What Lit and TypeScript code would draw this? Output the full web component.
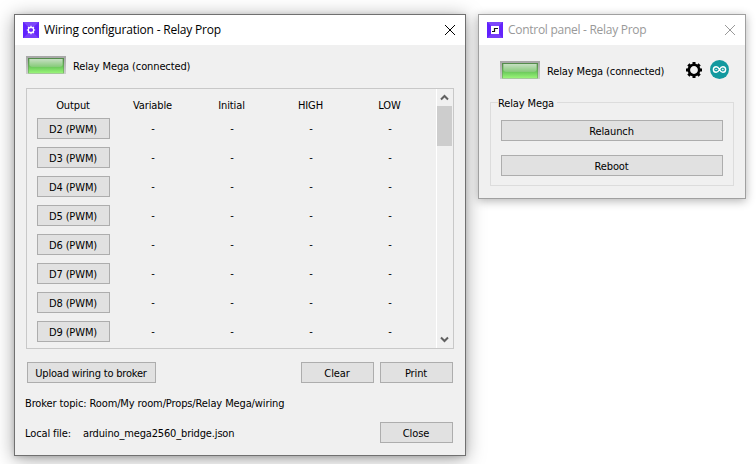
import { LitElement, html, css, svg } from "lit";
import { customElement, property } from "lit/decorators.js";

@customElement("status-led")
class StatusLed extends LitElement {
  static styles = css`
    :host { display: block; width: 40px; height: 18px; flex: none; }
    svg { display: block; }
  `;
  render() {
    return html`<svg width="40" height="18" viewBox="0 0 40 18">
      <defs>
        <linearGradient id="frame" x1="0" y1="0" x2="0" y2="1">
          <stop offset="0" stop-color="#a6a6a6" /><stop offset="1" stop-color="#cfcfcf" />
        </linearGradient>
        <linearGradient id="edge" x1="0" y1="0" x2="0" y2="1">
          <stop offset="0" stop-color="#528a4a" /><stop offset="1" stop-color="#7cc268" />
        </linearGradient>
        <linearGradient id="body" x1="0" y1="0" x2="0" y2="1">
          <stop offset="0" stop-color="#78b06e" /><stop offset=".55" stop-color="#6ac85a" /><stop offset="1" stop-color="#98f478" />
        </linearGradient>
        <linearGradient id="gloss" x1="0" y1="0" x2="0" y2="1">
          <stop offset="0" stop-color="#c6dfc2" /><stop offset="1" stop-color="#86ca79" />
        </linearGradient>
      </defs>
      <rect width="40" height="18" fill="url(#frame)" />
      <rect x="2" y="2" width="36" height="15.500" fill="url(#edge)" />
      <rect x="3" y="3" width="34" height="14" fill="url(#body)" />
      <path d="M3.500 3H36.500V9Q36 11 34 11H6Q4 11 3.500 9Z" fill="url(#gloss)" />
    </svg>`;
  }
}

@customElement("push-button")
class PushButton extends LitElement {
  static styles = css`
    :host { display: block; flex: none; width: 73px; }
    button {
      display: flex; align-items: center; justify-content: center;
      box-sizing: border-box; width: 100%; height: 21px; padding: 2px 1px 0 0;
      border: 1px solid #adadad; border-radius: 0; background: #e1e1e1;
      font: inherit; letter-spacing: inherit; color: #000; white-space: nowrap;
    }
  `;
  render() {
    return html`<button><slot></slot></button>`;
  }
}

@customElement("app-window")
class AppWindow extends LitElement {
  @property() heading = "";
  static styles = css`
    :host {
      display: flex; flex-direction: column; box-sizing: border-box;
      border: 1px solid var(--frame, #707070); background: #f0f0f0;
    }
    .bar { display: flex; align-items: center; height: 30px; padding: 0 9px 0 8px; background: #fff; }
    .icon { width: 16px; height: 16px; margin-right: 5px; }
    .title {
      flex: 1; font: 12px/16px "Open Sans", "Noto Sans", sans-serif;
      letter-spacing: var(--title-spacing, 0); color: var(--title, #000); white-space: nowrap;
    }
    .close { display: block; fill: none; stroke: var(--title, #000); stroke-width: 1; }
  `;
  render() {
    return html`
      <div class="bar">
        <div class="icon"><slot name="icon"></slot></div>
        <div class="title">${this.heading}</div>
        <svg class="close" width="12" height="12" viewBox="0 0 12 12"><path d="M1 1 11 11M11 1 1 11" /></svg>
      </div>
      <slot></slot>`;
  }
}

const tile = svg`
  <rect width="16" height="16" fill="#6a2cf5" />
  <path d="M0 0H16L8 8Z" fill="#7c47fa" />
  <path d="M0 16H16L8 8Z" fill="#783ff9" />
  <path d="M0 0V16L8 8Z" fill="#6020ff" />
  <path d="M16 0V16L8 8Z" fill="#6424fb" />`;

const spokes = (r1: number, r2: number) =>
  Array.from({ length: 8 }, (_, i) => {
    const a = (i * Math.PI) / 4;
    const c = Math.cos(a), s = Math.sin(a);
    return `M${(c * r1).toFixed(2)} ${(s * r1).toFixed(2)}L${(c * r2).toFixed(2)} ${(s * r2).toFixed(2)}`;
  }).join("");

const pins = ["D2", "D3", "D4", "D5", "D6", "D7", "D8", "D9"];

@customElement("app-root")
class AppRoot extends LitElement {
  static styles = css`
    :host {
      display: block; position: relative; width: 756px; height: 464px; overflow: hidden;
      background: #fff; color: #000;
      font: 11px/14px "DejaVu Sans Condensed", "DejaVu Sans", sans-serif;
      letter-spacing: -0.12px; white-space: nowrap;
    }
    svg { display: block; flex: none; }
    .wiring {
      position: absolute; left: 14px; top: 14px; width: 452px; height: 442px;
      --title-spacing: -0.2px;
      box-shadow: 0 3px 18px rgba(0, 0, 0, .36), 0 1px 5px rgba(0, 0, 0, .16);
    }
    .control {
      position: absolute; left: 478px; top: 14px; width: 268px; height: 185px;
      --frame: #a0a0a0; --title: #999; --title-spacing: -0.28px;
      box-shadow: 0 2px 9px rgba(0, 0, 0, .3);
    }
    .status { display: flex; align-items: center; gap: 7px; }
    .wiring .status { height: 18px; padding: 11px 11px 0; }
    .name { padding-top: 4px; }
    .scroller {
      display: flex; justify-content: space-between; box-sizing: border-box;
      width: 428px; height: 261px; margin: 14px 11px 0; border: 1px solid #c8c8c8;
    }
    .grid {
      display: grid; grid-template-columns: repeat(5, 73px); grid-auto-rows: 21px;
      gap: 8px 6px; padding: 9px 0 0 10px; grid-template-rows: 12px;
      align-items: center; text-align: center;
    }
    .head { padding-top: 3px; }
    .head:first-child { padding-right: 1px; }
    .cell { padding: 1px 0 0 1px; }
    .scrollbar {
      display: flex; flex-direction: column; width: 15px; padding-right: 1px;
      border-left: 1px solid #fff;
    }
    .arrow { display: flex; justify-content: center; align-items: center; height: 17px; }
    .arrow svg { fill: none; stroke: #606060; stroke-width: 2; }
    .thumb { height: 40px; background: #cdcdcd; }
    .track { flex: 1; }
    .actions { display: flex; gap: 6px; padding: 13px 12px 0; }
    .upload { width: 129px; margin-right: auto; letter-spacing: -0.2px; }
    .topic { padding: 14px 10px 0; line-height: 14px; }
    .file { display: flex; align-items: center; padding: 11px 12px 0 10px; }
    .file .label { width: 58px; padding-top: 2px; }
    .file .path { flex: 1; padding-top: 2px; letter-spacing: -0.16px; }
    .control .status { height: 19px; padding: 15px 16px 0 21px; }
    .control .name { flex: 1; padding-top: 4px; }
    .gear { margin-right: 1px; }
    .group {
      box-sizing: border-box; width: 244px; height: 84px; min-width: 0;
      margin: 23px 11px 0; padding: 0 10px; border: 1px solid #dcdcdc;
    }
    .legend {
      width: max-content; margin: -6px 0 9px -3px; padding-right: 3px;
      height: 14px; background: #f0f0f0;
    }
    .stack { display: flex; flex-direction: column; gap: 14px; }
    .stack push-button { width: 222px; }
  `;

  render() {
    return html`
      <app-window class="wiring" heading="Wiring configuration - Relay Prop">
        <svg slot="icon" width="16" height="16" viewBox="0 0 16 16">
          ${tile}
          <g transform="translate(8 8)" fill="none" stroke="#fff">
            <circle r="2.7" stroke-width="1.3" /><path d=${spokes(3, 4.2)} stroke-width="1.2" />
          </g>
        </svg>
        <div class="status"><status-led></status-led><div class="name">Relay Mega (connected)</div></div>
        <div class="scroller">
          <div class="grid">
            ${["Output", "Variable", "Initial", "HIGH", "LOW"].map((h) => html`<div class="head">${h}</div>`)}
            ${pins.map((p) => html`<push-button>${p} (PWM)</push-button>
              ${[0, 1, 2, 3].map(() => html`<div class="cell">-</div>`)}`)}
          </div>
          <div class="scrollbar">
            <div class="arrow"><svg width="9" height="7" viewBox="0 0 9 7"><path d="M1 5.5 4.5 2 8 5.5" /></svg></div>
            <div class="thumb"></div>
            <div class="track"></div>
            <div class="arrow"><svg width="9" height="7" viewBox="0 0 9 7"><path d="M1 1.5 4.5 5 8 1.5" /></svg></div>
          </div>
        </div>
        <div class="actions">
          <push-button class="upload">Upload wiring to broker</push-button>
          <push-button>Clear</push-button>
          <push-button>Print</push-button>
        </div>
        <div class="topic">Broker topic: Room/My room/Props/Relay Mega/wiring</div>
        <div class="file">
          <div class="label">Local file:</div>
          <div class="path">arduino_mega2560_bridge.json</div>
          <push-button>Close</push-button>
        </div>
      </app-window>

      <app-window class="control" heading="Control panel - Relay Prop">
        <svg slot="icon" width="16" height="16" viewBox="0 0 16 16">
          ${tile}
          <rect x="4" y="4" width="8" height="8" fill="#fff" />
          <path d="M5 9.5H7.5V6.5H11" fill="none" stroke="#111" stroke-width="1.2" />
        </svg>
        <div class="status">
          <status-led></status-led><div class="name">Relay Mega (connected)</div>
          <svg class="gear" width="16" height="16" viewBox="-8 -8 16 16" fill="none" stroke="#000">
            <circle r="5.2" stroke-width="2.6" /><path d=${spokes(5.5, 8)} stroke-width="3" />
          </svg>
          <svg width="19" height="19" viewBox="0 0 19 19" fill="none" stroke="#fff">
            <circle cx="9.5" cy="9.5" r="9.5" fill="#12999f" stroke="none" />
            <path d="M9.5 9.5C8.500 7.600 7.500 6.700 6.200 6.700a2.800 2.800 0 0 0 0 5.600C7.500 12.300 8.500 11.400 9.500 9.500S11.500 6.700 12.800 6.700a2.800 2.800 0 0 1 0 5.600C11.500 12.300 10.500 11.400 9.500 9.500Z" stroke-width="1.4" />
            <path d="M5.300 9.500H7.200M11.800 9.500H13.700M12.750 8.550V10.450" stroke-width=".7" />
          </svg>
        </div>
        <div class="group">
          <div class="legend">Relay Mega</div>
          <div class="stack">
            <push-button>Relaunch</push-button>
            <push-button>Reboot</push-button>
          </div>
        </div>
      </app-window>
    `;
  }
}
